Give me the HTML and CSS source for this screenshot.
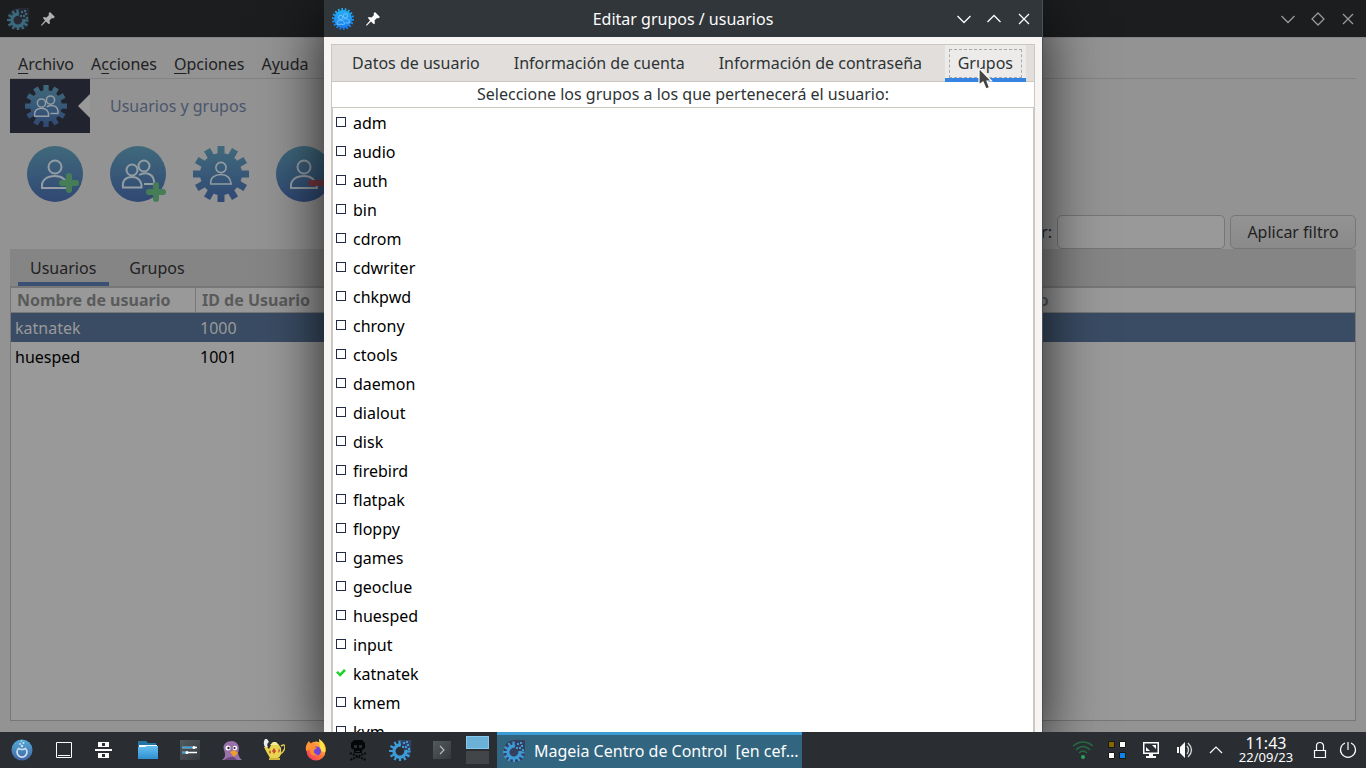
FILE: index.html
```html
<!DOCTYPE html>
<html lang="es">
<head>
<meta charset="utf-8">
<title>Editar grupos / usuarios</title>
<link rel="stylesheet" href="styles.css">
</head>
<body>
<svg class="defs" aria-hidden="true">
  <defs>
    <linearGradient id="dim" x1="0" y1="0" x2="0" y2="56" gradientUnits="userSpaceOnUse"><stop offset="0" stop-color="#40697b"/><stop offset="1" stop-color="#304874"/></linearGradient>
    <linearGradient id="bright" x1="0" y1="0" x2="0" y2="56" gradientUnits="userSpaceOnUse"><stop offset="0" stop-color="#22b5fa"/><stop offset="1" stop-color="#1878ee"/></linearGradient>
    <linearGradient id="menuball" x1="0" y1="0" x2="0" y2="1"><stop offset="0" stop-color="#54acd8"/><stop offset="1" stop-color="#4264a5"/></linearGradient>
    <linearGradient id="folder" x1="0" y1="0" x2="0" y2="1"><stop offset="0" stop-color="#64c0f0"/><stop offset="1" stop-color="#328fd0"/></linearGradient>
    <linearGradient id="fox" x1="1" y1="0" x2="0" y2="1"><stop offset="0" stop-color="#ffe046"/><stop offset=".5" stop-color="#ff7636"/><stop offset="1" stop-color="#f22a72"/></linearGradient>
    <linearGradient id="slate" x1="0" y1="0" x2="1" y2="1"><stop offset="0" stop-color="#535b5e"/><stop offset="1" stop-color="#34393d"/></linearGradient>
    <symbol id="gear" viewBox="0 0 56 56">
      <circle cx="28" cy="28" r="21" stroke="none"/>
      <path stroke="none" d="M24.500 0H31.500V56H24.500ZM0 24.500H56V31.500H0ZM11 5.500L17 2L45 50.500L39 54ZM39 2L45 5.500L17 54L11 50.500ZM2 17L5.500 11L54 39L50.500 45ZM2 39L50.500 11L54 17L5.500 45Z"/>
    </symbol>
    <symbol id="fine-gear" viewBox="0 0 56 56">
      <circle cx="28" cy="28" r="23" stroke="none"/>
      <circle cx="28" cy="28" r="25" fill="none" stroke-width="6" pathLength="36" stroke-dasharray="1 1"/>
    </symbol>
    <symbol id="person" viewBox="0 0 56 56">
      <g fill="none" stroke-width="2"><circle cx="28" cy="21" r="6.5"/><path d="M15 42C14 34 20 30 28 30C36 30 40 35 41 42Z" /></g>
    </symbol>
    <symbol id="people" viewBox="0 0 56 56">
      <g fill="none" stroke-width="2"><circle cx="22" cy="24" r="5.5"/><path d="M13 41.500C12 34 16 31 22 31S32 35 31.500 41.500Z"/><circle cx="34" cy="20" r="5.500"/><path d="M29 29C36 25 45 28 44 38H34"/></g>
    </symbol>
    <symbol id="mcc" viewBox="0 0 22 22">
      <path fill="none" stroke-width="3.200" d="M12 6.200A6 6 0 1 0 16.800 11"/>
      <path fill="none" stroke-width="2.200" d="M10.500 1.500V5M5.500 3L7.500 6.500M1.500 7L5 9M0 12H4M1.500 17.500L5 15.500M5.500 21L7.500 17.500M11 18V22M16.500 21L14.500 17.500M20.500 17.500L17 15.500M17 12.500H21.500"/>
      <path stroke="none" d="M13 7H15V9H13ZM14 3H16V5H14ZM17 2H19V4H17ZM18 5H20V7H18ZM16 7H18V9H16ZM19 9H21V11H19Z"/>
    </symbol>
    <symbol id="pin" viewBox="0 0 14 14"><path d="M9 0L14 5L12 6.500L11 6L8.500 8.500L9 11.500L7.500 12L5 9.500L1 13.500H0V13L4 8.500L2 6L2.500 5L5.500 5.500L8 3L7.500 1.500Z"/></symbol>
    <symbol id="down" viewBox="0 0 16 16"><path fill="none" stroke-width="1.300" d="M1.500 5L8 11.500L14.500 5"/></symbol>
    <symbol id="up" viewBox="0 0 16 16"><path fill="none" stroke-width="1.300" d="M1.500 11L8 4.500L14.500 11"/></symbol>
    <symbol id="close" viewBox="0 0 16 16"><path fill="none" stroke-width="1.300" d="M3 3L13 13M13 3L3 13"/></symbol>
    <symbol id="diamond" viewBox="0 0 16 16"><path fill="none" stroke-width="1.300" d="M8 2L14 8L8 14L2 8Z"/></symbol>
  </defs>
</svg>

<div class="desktop">
  <div class="workspace">
    <section class="main-window" aria-label="Usuarios y grupos">
      <header class="titlebar titlebar-dim">
        <svg class="app-icon mcc-dim" viewBox="0 0 22 22"><path d="M11 0H22V11Q22 22 11 22Q1 21 1 11Q1 1 11 0Z" fill="#272a34" stroke="none"/><use href="#mcc"/></svg>
        <svg class="pin"><use href="#pin"/></svg>
        <div class="window-buttons">
          <button aria-label="Minimizar"><svg><use href="#down"/></svg></button>
          <button aria-label="Restaurar"><svg><use href="#diamond"/></svg></button>
          <button aria-label="Cerrar"><svg><use href="#close"/></svg></button>
        </div>
      </header>
      <div class="main-body">
        <nav class="menubar">
          <button><u>A</u>rchivo</button>
          <button>A<u>c</u>ciones</button>
          <button><u>O</u>pciones</button>
          <button>A<u>y</u>uda</button>
        </nav>
        <div class="banner">
          <div class="banner-art">
            <svg class="banner-gear" viewBox="0 0 56 56"><use href="#gear" class="dim-shape"/><use href="#people" class="dim-line"/></svg>
            <svg class="notch" viewBox="0 0 12 24"><path d="M12 0L0 12L12 24Z" fill="#999"/></svg>
          </div>
          <h1>Usuarios y grupos</h1>
        </div>
        <div class="toolbar">
          <button aria-label="Añadir usuario"><svg viewBox="0 0 56 56"><circle cx="28" cy="28" r="28" class="dim-shape"/><use href="#person" class="dim-line"/><path d="M42 30V44M35 37H49" class="plus"/></svg></button>
          <button aria-label="Añadir grupo"><svg viewBox="0 0 56 56"><circle cx="28" cy="28" r="28" class="dim-shape"/><use href="#people" class="dim-line"/><path d="M46 39V53M39 46H53" class="plus"/></svg></button>
          <button aria-label="Editar"><svg viewBox="0 0 56 56"><use href="#gear" class="dim-shape"/><use href="#person" class="dim-line" x="6" y="5" width="44" height="44"/></svg></button>
          <button aria-label="Borrar"><svg viewBox="0 0 56 56"><circle cx="28" cy="28" r="28" class="dim-shape"/><use href="#person" class="dim-line"/><path d="M35 37H52" class="minus"/></svg></button>
        </div>
        <form class="filter">
          <label for="filter">Filtrar:</label>
          <input id="filter" type="text">
          <button type="button">Aplicar filtro</button>
        </form>
        <div class="main-tabs">
          <button class="selected">Usuarios</button>
          <button>Grupos</button>
        </div>
        <div class="user-list">
          <table>
            <colgroup><col class="col-name"><col class="col-id"><col></colgroup>
            <thead><tr><th>Nombre de usuario</th><th>ID de Usuario</th><th>Estado</th></tr></thead>
            <tbody>
              <tr class="selected"><td>katnatek</td><td>1000</td><td></td></tr>
              <tr><td>huesped</td><td>1001</td><td></td></tr>
            </tbody>
          </table>
        </div>
      </div>
    </section>

    <section class="dialog" role="dialog" aria-labelledby="dialog-title">
      <header class="titlebar">
        <svg class="app-icon" viewBox="0 0 56 56"><use href="#fine-gear" class="bright-shape"/><use href="#people" class="bright-line"/></svg>
        <svg class="pin"><use href="#pin"/></svg>
        <h2 id="dialog-title">Editar grupos / usuarios</h2>
        <div class="window-buttons">
          <button aria-label="Minimizar"><svg><use href="#down"/></svg></button>
          <button aria-label="Maximizar"><svg><use href="#up"/></svg></button>
          <button aria-label="Cerrar"><svg><use href="#close"/></svg></button>
        </div>
      </header>
      <div class="notebook">
        <div class="tabs">
          <button>Datos de usuario</button>
          <button>Información de cuenta</button>
          <button>Información de contraseña</button>
          <button class="selected">Grupos<svg class="cursor" viewBox="0 0 15 24"><path d="M1 1V18L5 15L8 22L11.500 20.500L9 14H13.500Z" fill="#444" stroke="#fff" stroke-width="1.200"/></svg></button>
        </div>
        <p class="hint">Seleccione los grupos a los que pertenecerá el usuario:</p>
        <div class="group-list">
          <label><input type="checkbox">adm</label>
          <label><input type="checkbox">audio</label>
          <label><input type="checkbox">auth</label>
          <label><input type="checkbox">bin</label>
          <label><input type="checkbox">cdrom</label>
          <label><input type="checkbox">cdwriter</label>
          <label><input type="checkbox">chkpwd</label>
          <label><input type="checkbox">chrony</label>
          <label><input type="checkbox">ctools</label>
          <label><input type="checkbox">daemon</label>
          <label><input type="checkbox">dialout</label>
          <label><input type="checkbox">disk</label>
          <label><input type="checkbox">firebird</label>
          <label><input type="checkbox">flatpak</label>
          <label><input type="checkbox">floppy</label>
          <label><input type="checkbox">games</label>
          <label><input type="checkbox">geoclue</label>
          <label><input type="checkbox">huesped</label>
          <label><input type="checkbox">input</label>
          <label><input type="checkbox" checked>katnatek</label>
          <label><input type="checkbox">kmem</label>
          <label><input type="checkbox">kvm</label>
        </div>
      </div>
    </section>
  </div>

  <footer class="taskbar">
    <div class="launchers">
      <button aria-label="Menú"><svg viewBox="0 0 22 22"><circle cx="11" cy="11" r="10.500" fill="url(#menuball)"/><path d="M7.500 9.500A5 5 0 1 0 14.500 9.500Q11 11.500 7.500 9.500Z" fill="none" stroke="#cde0ee" stroke-width="1.700"/><g fill="#cde0ee"><circle cx="11" cy="7" r="1.200"/><circle cx="9" cy="5" r=".9"/><circle cx="12.500" cy="4" r="1"/><circle cx="10.500" cy="2" r=".8"/></g></svg></button>
      <button aria-label="Mostrar escritorio"><svg viewBox="0 0 22 22"><path d="M3.500 3.500H18.500V18.500H3.500ZM5 16.500H17" fill="none" stroke="#fcfcfc"/></svg></button>
      <button aria-label="Actividades"><svg viewBox="0 0 22 22"><path d="M3 3H14V8H3ZM0 10H17V12H0ZM3 14H14V19H3Z" fill="#fcfcfc"/><path d="M7 4H10V7H7ZM7 15H10V18H7Z" fill="#2a2e32"/></svg></button>
      <button aria-label="Archivos"><svg viewBox="0 0 22 22"><path d="M1 2H9L11 4H19V10H1Z" fill="#2475a0"/><path d="M2 6H20V12H2Z" fill="#f8fafb"/><path d="M1 8H8L10 7H21V20H1Z" fill="url(#folder)"/></svg></button>
      <button aria-label="Preferencias"><svg viewBox="0 0 22 22"><path d="M1 1H21V21H1Z" fill="url(#slate)"/><path d="M3 8.500H18M3 13.500H18" stroke="#fff" stroke-width="1.500"/><path d="M3 8.500H14M3 13.500H7" stroke="#36a3df" stroke-width="1.500"/><circle cx="15" cy="8.500" r="1.500" fill="#fff"/><circle cx="8" cy="13.500" r="1.500" fill="#fff"/></svg></button>
      <button aria-label="Pidgin"><svg viewBox="0 0 22 22"><path d="M1 21Q6 18 3 11C1 5 6 2 11 2C18 3 19 9 17 14Q18 19 21 21Z" fill="#9871ab"/><path d="M3 21Q8 17 13 18L16 21Z" fill="#6b477d"/><circle cx="7" cy="9" r="2.500" fill="#fff"/><circle cx="14" cy="9" r="2.300" fill="#fff"/><circle cx="7.500" cy="9" r="1.200" fill="#282030"/><circle cx="13.500" cy="9" r="1.100" fill="#282030"/><path d="M9 13L13 11L17 14L13 18Z" fill="#f59a2c"/></svg></button>
      <button aria-label="Tetera"><svg viewBox="0 0 22 22"><path d="M2 0Q-1 5 3 9L5 8Q3 5 6 3L4 0Z" fill="#eee"/><path d="M18 7Q23 4 21.500 10Q20 14 17 15" fill="none" stroke="#e3cb46" stroke-width="1.500"/><path d="M1 8H4L6 10L8 6H16L18 9Q19 17 15 19H7L4 14Z" fill="#ead34f"/><path d="M7 6H16L13 3H10Z" fill="#f6ed9b"/><path d="M6 19H17V21H6Z" fill="#d0b43b"/><path d="M11 9L13 12L11 15L9 12ZM16 9L17 12L15 14ZM7 11L8 13L7 15L6 13Z" fill="#c24c31"/></svg></button>
      <button aria-label="Firefox"><svg viewBox="0 0 22 22"><circle cx="11" cy="12" r="9.500" fill="url(#fox)"/><path d="M1 12Q0 6 4 2L6 5L10 6L8 10L3 11ZM14 0Q22 5 21 13L16 8Z" fill="#ff9338"/><path d="M14 0Q21 4 20 13Q15 13 15 8Z" fill="#ffe246"/><circle cx="11.500" cy="12" r="4.500" fill="#7344da"/><path d="M4 9Q9 6 12 9L9 11Q8 15 13 16Q6 18 5 13Z" fill="#ff8a34"/></svg></button>
      <button aria-label="Calavera"><svg viewBox="0 0 22 22"><path d="M3 14L19 21M19 14L3 21" stroke="#08090a" stroke-width="2" stroke-dasharray="2 1"/><path fill-rule="evenodd" d="M7 1H15L18 4V9L15 11V14H7V11L4 9V4ZM7 6V9H10V6ZM12 6V9H15V6ZM9 12V13H13V12Z" fill="#050607"/></svg></button>
      <button aria-label="Centro de control"><svg class="mcc-bright" viewBox="0 0 22 22"><path d="M11 1H22V11Q22 16 18 19Z" fill="#334366" stroke="none"/><use href="#mcc"/></svg></button>
      <button aria-label="Terminal"><svg viewBox="0 0 22 22"><path d="M2 2H20V20H2Z" fill="url(#slate)"/><path d="M9 7L13 11L9 15" fill="none" stroke="#b4babd" stroke-width="1.200"/></svg></button>
    </div>
    <div class="pager"><span class="current"></span><span></span></div>
    <button class="task"><svg class="mcc-bright" viewBox="0 0 22 22"><path d="M11 0H22V11Q22 22 11 22Q1 21 1 11Q1 1 11 0Z" fill="#35405f" stroke="none"/><use href="#mcc"/></svg><span>Mageia Centro de Control&nbsp; [en cef...</span></button>
    <div class="tray">
      <button aria-label="Red"><svg viewBox="0 0 22 22"><path d="M1 7Q11-1 21 7M4 11Q11 4 18 11M7 14Q11 10 15 14" fill="none" stroke="#246b43" stroke-width="1.500"/><circle cx="11" cy="18" r="2" fill="#27a35c"/></svg></button>
      <button aria-label="Aplicación"><svg viewBox="0 0 22 22"><g stroke="#171812"><path d="M2.500 2.500H8.500V8.500H2.500Z" fill="#876500"/><path d="M13.500 2.500H19.500V8.500H13.500ZM2.500 13.500H8.500V19.500H2.500Z" fill="#fff"/><path d="M13.500 13.500H19.500V19.500H13.500Z" fill="#0c83ee"/></g></svg></button>
      <button aria-label="Pantalla"><svg viewBox="0 0 22 22"><path fill-rule="evenodd" d="M3 3H19V15H13V17H16V19H6V17H9V15H3ZM4.500 4.500V13.500H17.500V4.500Z" fill="#fcfcfc"/><path d="M12 6H16V10ZM6 8V12H10Z" fill="#fcfcfc"/></svg></button>
      <button aria-label="Volumen"><svg viewBox="0 0 22 22"><path d="M3 8H5V14H3ZM6 8L11 3V19L6 14Z" fill="#fcfcfc"/><path d="M13 7Q16 11 13 15M14 4Q21 11 14 18" fill="none" stroke="#d6d7d8" stroke-width="1.300"/></svg></button>
      <button class="narrow" aria-label="Mostrar más"><svg viewBox="0 0 22 22"><path d="M5 14L11 8L17 14" fill="none" stroke="#fcfcfc" stroke-width="1.200"/></svg></button>
      <div class="clock"><time class="time">11:43</time><time class="date">22/09/23</time></div>
      <button class="narrow" aria-label="Bloquear"><svg viewBox="0 0 22 22"><path d="M5.500 11.500H16.500V18.500H5.500ZM7.500 11V7A3.500 3.500 0 0 1 14.500 7V11" fill="none" stroke="#fcfcfc" stroke-width="1.200"/></svg></button>
      <button class="narrow" aria-label="Apagar"><svg viewBox="0 0 22 22"><path d="M8 4A7.500 7.500 0 1 0 14 4M11 3V11" fill="none" stroke="#fcfcfc" stroke-width="1.200"/></svg></button>
    </div>
  </footer>
</div>
</body>
</html>
```
FILE: styles.css
```css
* { box-sizing: border-box; }
body { margin: 0; font: 16px/24px "Noto Sans", sans-serif; color: #2e3436; }
button, input { font: inherit; color: inherit; margin: 0; }
button { background: none; border: 0; padding: 0; white-space: nowrap; }
svg { display: block; flex: none; }
h1, h2, p { margin: 0; font-size: 16px; font-weight: 400; }
.defs { position: absolute; width: 0; height: 0; }

.desktop { display: flex; flex-direction: column; height: 100vh; overflow: hidden; }
.workspace { position: relative; flex: 1; min-height: 0; overflow: hidden; }

.titlebar { display: flex; align-items: center; height: 37px; padding: 0 8px; gap: 12px; background: #31363b; color: #fcfcfc; }
.titlebar h2 { flex: 1; text-align: center; padding-left: 30px; }
.titlebar-dim { background: #1b1d1e; color: #999; padding: 0 8px 0 7px; }
.app-icon { width: 22px; height: 22px; }
.pin { width: 14px; height: 14px; fill: currentColor; }
.window-buttons { display: flex; gap: 14px; margin-left: auto; padding-right: 2px; }
.window-buttons svg { width: 16px; height: 16px; stroke: currentColor; }
.titlebar-dim .pin { color: #b0b0b0; }

.mcc-dim { fill: #3a6a7c; stroke: #3a6a7c; }
.mcc-bright { fill: #3c9bd8; stroke: #3c9bd8; }
.dim-shape { fill: url(#dim); }
.dim-line { fill: none; stroke: #939da3; }
.bright-shape { fill: url(#bright); stroke: url(#bright); }
.bright-line { stroke: #8ccaf9; }
.plus, .minus { fill: none; stroke: #467d57; stroke-width: 6; stroke-linecap: round; }
.minus { stroke: #773a42; }

.main-window { display: flex; flex-direction: column; height: 100%; background: #939393; color: #1f2223; }
.main-body { flex: 1; display: flex; flex-direction: column; min-height: 0; padding: 12px 10px 11px; border-top: 1px solid #858585; }
.menubar { display: flex; gap: 17px; height: 29px; padding: 2px 8px 0; border-bottom: 1px solid #828282; }
.menubar button { height: 24px; }
.menubar u { text-underline-offset: 3px; text-decoration-skip-ink: none; }
.banner { display: flex; align-items: center; gap: 20px; color: #4c566b; }
.banner-art { display: flex; align-items: center; justify-content: flex-end; gap: 11px; width: 80px; height: 54px; background: #21242f; }
.banner-gear { width: 42px; height: 42px; }
.notch { width: 12px; height: 24px; }
.toolbar { display: flex; gap: 27px; padding: 13px 17px; }
.toolbar svg { width: 56px; height: 56px; }
.filter { display: flex; justify-content: flex-end; align-items: center; gap: 5px; }
.filter input { width: 168px; height: 34px; background: #999; border: 1px solid #777; border-radius: 5px; }
.filter button { height: 34px; padding: 0 16px; min-width: 126px; border: 1px solid #777; border-radius: 5px; background: linear-gradient(#939393, #8a8a8a); }
.main-tabs { display: flex; gap: 8px; height: 38px; padding: 0 8px; background: #858585; border-bottom: 1px solid #777; }
.main-tabs button { padding: 0 13px 0 12px; border-bottom: 4px solid transparent; border-top: 5px solid transparent; }
.main-tabs .selected { border-bottom-color: #3a5174; }
.user-list { flex: 1; border: 1px solid #777; background: #999; }
table { width: 100%; border-collapse: separate; border-spacing: 0; table-layout: fixed; }
.col-name { width: 185px; }
.col-id { width: 793px; }
th { height: 25px; padding: 0 6px; line-height: 24px; text-align: left; color: #595b5b; border-bottom: 1px solid #777; }
th:first-child { border-right: 1px solid #777; }
td { height: 29px; padding: 0 4px; color: #000; }
tr.selected td { background: #3a4c64; color: #999; }

.dialog { position: absolute; inset: 0 324px 0; display: flex; flex-direction: column; background: #f6f5f4; box-shadow: 1px 0 0 #485157, 0 16px 56px rgba(0, 0, 0, .8); }
.notebook { flex: 1; min-height: 0; display: flex; flex-direction: column; margin: 7px 7px 0; border: 1px solid #cdc7c2; border-bottom: 0; background: #fff; }
.tabs { display: flex; gap: 10px; height: 37px; padding: 0 8px; background: #e1dedb; border-bottom: 1px solid #cdc7c2; }
.tabs button { position: relative; padding: 0 12px 2px; height: 37px; }
.tabs .selected { margin-left: auto; padding: 0 13px 2px; background: #edebea; border-bottom: 4px solid #3584e4; border-top: 4px solid #edebea; outline: 1px dashed #aaa; outline-offset: -5px; }
.cursor { position: absolute; left: 33px; top: 18px; width: 15px; height: 24px; z-index: 1; }
.hint { height: 25px; text-align: center; }
.group-list { flex: 1; min-height: 0; overflow: hidden; border: 1px solid #cdc7c2; border-bottom: 0; }
.group-list label { display: flex; align-items: center; gap: 7px; height: 29px; padding: 0 3px; color: #000; }
.group-list input { appearance: none; width: 10px; height: 10px; margin: 0 0 1px; border: 1px solid #232b45; border-radius: 0; background: #fff; }
.group-list input:checked { border: 0; background: #1fd02a; clip-path: polygon(0 45%, 20% 30%, 40% 52%, 80% 10%, 100% 28%, 42% 88%); }

.taskbar { display: flex; height: 36px; padding: 0 4px 0 1px; background: #2a2e32; color: #fcfcfc; flex: none; }
.taskbar button svg { width: 22px; height: 22px; margin: auto; }
.launchers, .tray { display: flex; }
.launchers button { width: 42px; }
.pager { width: 23px; margin: 4px 8px 4px 3px; display: grid; grid-template-rows: 1fr 1fr; gap: 2px; }
.pager span { background: #434649; }
.pager .current { background: #6bb0d6; border: 1px solid #86c8ec; }
.task { flex: 0 1 305px; min-width: 0; display: flex; align-items: center; gap: 9px; padding: 0 6px 2px; background: #316580; border-top: 3px solid #3b9cd5; overflow: hidden; }
.taskbar .task svg { margin: 0; }
.tray { margin-left: auto; align-items: center; }
.tray button { width: 34px; }
.tray .narrow { width: 28px; }
.clock { width: 72px; margin-right: 4px; display: flex; flex-direction: column; align-items: center; }
.time { font-size: 16px; line-height: 14px; }
.date { font-size: 13px; line-height: 14px; }
```
